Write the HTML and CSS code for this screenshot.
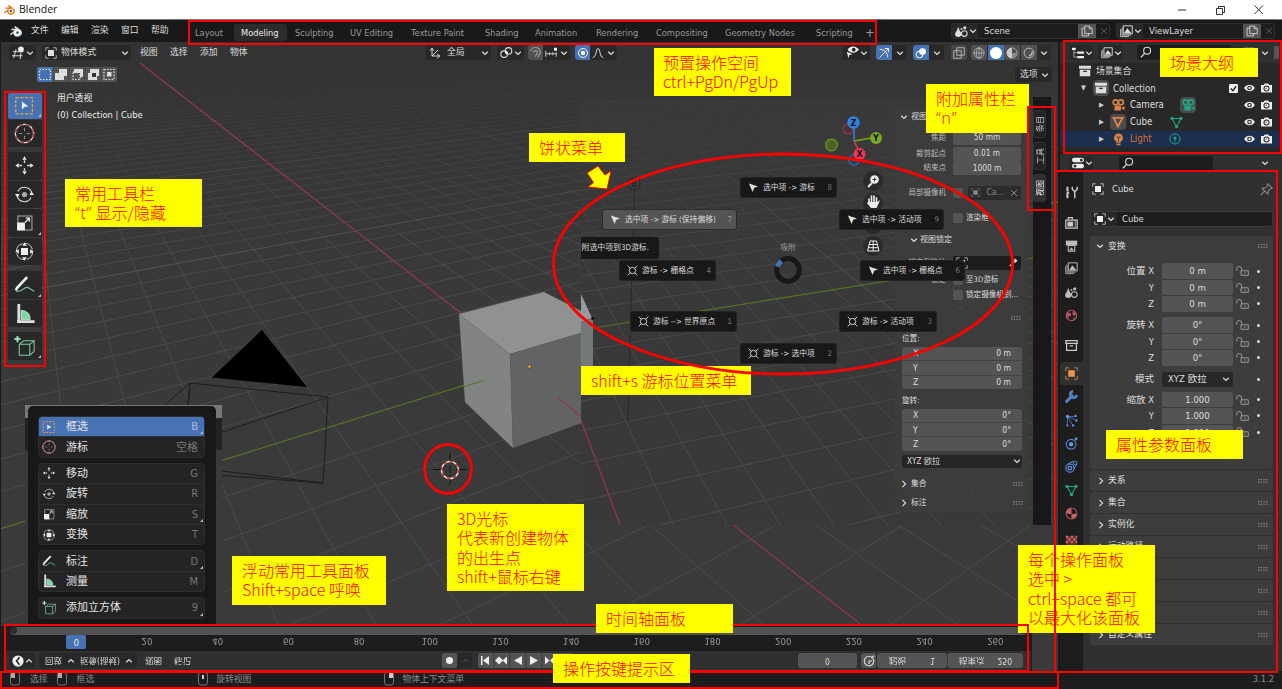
FILE: index.html
```html
<!DOCTYPE html>
<html lang="zh-CN">
<head>
<meta charset="utf-8">
<title>Blender</title>
<link rel="stylesheet" href="styles.css">
</head>
<body>
<svg class="defs" aria-hidden="true">
  <symbol id="chev" viewBox="0 0 8 8"><path d="M1.2 2.8 4 5.4 6.8 2.8" fill="none" stroke="currentColor" stroke-width="1.3"/></symbol>
  <symbol id="chevr" viewBox="0 0 8 8"><path d="M2.4 .8 5.6 4 2.4 7.2" fill="none" stroke="currentColor" stroke-width="1.1"/></symbol>
  <symbol id="x" viewBox="0 0 8 8"><path d="M1 1l6 6M7 1 1 7" fill="none" stroke="currentColor"/></symbol>
  <symbol id="obj" viewBox="0 0 16 16"><path d="M1 5V1h4M11 1h4v4M15 11v4h-4M5 15H1v-4" fill="none" stroke="currentColor" stroke-width="1.2" opacity=".75"/><rect x="4" y="4" width="8" height="8" fill="currentColor"/></symbol>
  <symbol id="logo" viewBox="0 0 16 14"><path d="M.8 10.800 6.500 6H2.500V4.300h5.300L5.900 2.500 7.200 1.200l6 4.400c3.600 3 1.400 8-3.500 8-3 0-5-2-4.900-4.200L2 12z" fill="currentColor"/><ellipse cx="9.700" cy="9" rx="3.200" ry="2.800" class="logo-ring"/><circle cx="9.700" cy="9" r="1.600" class="logo-core"/></symbol>
  <symbol id="search" viewBox="0 0 16 16"><circle cx="9.500" cy="6.300" r="4.600" fill="none" stroke="currentColor" stroke-width="1.500"/><path d="M6.200 9.800 1.200 15" stroke="currentColor" stroke-width="1.800"/></symbol>
  <symbol id="copy" viewBox="0 0 16 16"><path d="M5 1.500h6L15 5v6.500H5zM11 1.500V5h4M5 4H1.500v10.500H10v-3" fill="none" stroke="currentColor" stroke-width="1.300"/></symbol>
  <symbol id="scene-i" viewBox="0 0 16 16"><path d="M4 2 8 13H0z" fill="currentColor"/><circle cx="4" cy="11" r="3.700" fill="currentColor"/><circle cx="11.500" cy="10.500" r="3.500" fill="none" stroke="currentColor" stroke-width="1.300"/><circle cx="12" cy="3.500" r="2" fill="currentColor"/><circle cx="8" cy="5" r="1.200" fill="currentColor"/></symbol>
  <symbol id="layers" viewBox="0 0 16 16"><path d="M4 1h11v10H4z" fill="none" stroke="currentColor" stroke-width="1.200"/><path d="M5 10 9 4l5 6z" fill="currentColor"/><path d="M2.500 3v9.500H13M.8 5v9.300H11" fill="none" stroke="currentColor"/></symbol>
  <symbol id="eye" viewBox="0 0 16 12"><path d="M0 6C4-.5 12-.5 16 6 12 12.500 4 12.500 0 6z" fill="currentColor"/><circle cx="8" cy="6" r="3.500" fill="#282828"/><circle cx="8" cy="6" r="1.700" fill="currentColor"/></symbol>
  <symbol id="render" viewBox="0 0 16 14"><path d="M0 2.500h4L5.500.3h5L12 2.500h4v11H0z" fill="currentColor"/><circle cx="8" cy="7.800" r="4.400" fill="#282828"/><circle cx="8" cy="7.800" r="2.900" fill="currentColor"/><path d="M7 8.500a1.500 1.500 0 0 1 1.500-1.800" stroke="#282828" fill="none"/></symbol>
  <symbol id="box" viewBox="0 0 16 14"><path d="M0 0h16v4H0zM1 5.200h14V14H1z" fill="currentColor"/><path d="M5.500 7.500h5" stroke="#333" stroke-width="1.800"/></symbol>
  <symbol id="movie" viewBox="0 0 16 16"><circle cx="4.500" cy="4" r="3" fill="none" stroke="currentColor" stroke-width="2"/><circle cx="11" cy="4" r="3" fill="none" stroke="currentColor" stroke-width="2"/><path d="M3 8h8v6H3zM12 10.500 15.500 8.500v5L12 12z" fill="currentColor"/></symbol>
  <symbol id="mesh" viewBox="0 0 16 16"><path d="M2.500 3h11L8 13z" fill="none" stroke="currentColor" stroke-width="1.300"/><g fill="currentColor"><circle cx="2.500" cy="3" r="2"/><circle cx="13.500" cy="3" r="2"/><circle cx="8" cy="13" r="2"/></g></symbol>
  <symbol id="bulb" viewBox="0 0 16 16"><circle cx="8" cy="6" r="5.500" fill="currentColor"/><path d="M5.500 11h5v4h-5z" fill="currentColor"/><path d="M5.500 5h5M8 5v6M5 12.500h6" fill="none" stroke="#2a3140"/></symbol>
  <symbol id="lamp" viewBox="0 0 16 16"><circle cx="8" cy="8" r="6.800" fill="none" stroke="currentColor" stroke-width="1.300"/><circle cx="8" cy="6.500" r="2" fill="currentColor"/><path d="M8 8v6" stroke="currentColor"/></symbol>
  <symbol id="lock" viewBox="0 0 13 10"><path d="M.7 4.500V3a2.500 2.500 0 0 1 5 0v2" fill="none" stroke="currentColor"/><path d="M5 4.800h7.300V9.300H5z" fill="none" stroke="currentColor"/><path d="M8 7h1.500" stroke="currentColor"/></symbol>
  <symbol id="pin" viewBox="0 0 16 16"><path d="M9.500 1 15 6.500l-2 .5-3 3 .3 2.500-1 1L2.800 7l1-1 2.600.2 3-3zM5.500 10 1 15" fill="none" stroke="currentColor" stroke-width="1.300"/></symbol>
  <symbol id="dots" viewBox="0 0 10 4"><path d="M0 .7h10M0 3.200h10" stroke="currentColor" stroke-dasharray="1.400 1.300"/></symbol>
  <symbol id="arrow" viewBox="0 0 12 12"><path d="M1 1.500 11 5 6.800 6.300 5 11z" fill="currentColor"/></symbol>
  <symbol id="cur" viewBox="0 0 16 16"><circle cx="8" cy="8" r="4.600" fill="none" stroke="currentColor" stroke-width="1.300"/><path d="M1 1l3.800 3.800M15 1l-3.800 3.800M1 15l3.800-3.800M15 15l-3.800-3.800" stroke="currentColor" stroke-width="1.300"/></symbol>
  <symbol id="t-select" viewBox="0 0 24 24"><rect x="2" y="3" width="19" height="18.500" fill="none" stroke="#eaa93c" stroke-width="1.400" stroke-dasharray="3.500 1.800"/><path d="M9 7.500 16.500 13l-4.200.5L9 16.500z" fill="#eee"/></symbol>
  <symbol id="t-cursor" viewBox="0 0 24 24"><circle cx="12" cy="12" r="10.500" fill="none" stroke="#ddd" stroke-width="1.500"/><circle cx="12" cy="12" r="10.500" fill="none" stroke="#b33c48" stroke-width="1.700" stroke-dasharray="4.500 4"/><path d="M12 5.500v4M12 14.500v4M5.500 12h4M14.500 12h4" stroke="#aaa" stroke-width=".9"/></symbol>
  <symbol id="t-move" viewBox="0 0 24 24"><path d="M12 1.500 14.500 5.500h-5zM12 22.500 14.500 18.500h-5zM1.500 12 5.500 9.500v5zM22.500 12 18.500 9.500v5z" fill="#eee"/><path d="M12 6V9M12 15v3M6 12h3M15 12h3" stroke="#ddd" stroke-width="1.600"/></symbol>
  <symbol id="t-rotate" viewBox="0 0 24 24"><circle cx="12" cy="12" r="3" fill="#aaa"/><path d="M4.500 8.500A8.500 8.500 0 0 1 20.500 11M19.500 15.500A8.500 8.500 0 0 1 3.500 13" fill="none" stroke="#ddd" stroke-width="1.200"/><path d="M1 11.500h5.500L4 15.500zM17.500 12.500H23L20 8.500z" fill="#eee"/></symbol>
  <symbol id="t-scale" viewBox="0 0 24 24"><path d="M4.500 4.500h16v16h-16z" fill="none" stroke="#aaa" stroke-width="1.200"/><path d="M3.500 12h9v9h-9z" fill="#eee"/><path d="M12.500 12l5-5M13.500 7h4V11" fill="none" stroke="#eee" stroke-width="1.400"/></symbol>
  <symbol id="t-transform" viewBox="0 0 24 24"><circle cx="12" cy="12" r="9.300" fill="none" stroke="#ccc" stroke-width="1.100" stroke-dasharray="12 2.600"/><path d="M8 8h8v8H8zM12 1.500l2.500 4h-5zM12 22.500l2.500-4h-5zM1.500 12l4-2.500v5zM22.500 12l-4-2.500v5z" fill="#eee"/></symbol>
  <symbol id="t-pen" viewBox="0 0 24 24"><path d="M2 19C10 23 11 12 17 16s4 2 6 4" fill="none" stroke="#7bc7a0" stroke-width="1.300"/><path d="M15 3.500 3.800 15.500 2 18.500" fill="none" stroke="#eee" stroke-width="3"/></symbol>
  <symbol id="t-measure" viewBox="0 0 24 24"><path d="M8 8.500A9.500 9.500 0 0 1 18.500 19H8z" fill="#83d3a8" stroke="#d8f0e0" stroke-width=".8"/><path d="M5.500 1V21M3.500 21.300h20" fill="none" stroke="#ddd" stroke-width="3.200"/></symbol>
  <symbol id="t-cube" viewBox="0 0 24 24"><path d="M6 9.500h12V22H6zM6 9.500l5-4h12l-5 4M23 5.500v12L18 22" fill="none" stroke="#83c7a3" stroke-width="1.200"/><path d="M4 0v7M.5 3.500h7" stroke="#9ae0ba" stroke-width="2.200"/></symbol>
  <symbol id="mouse" viewBox="0 0 12 14"><rect x="1.500" y=".5" width="9" height="12.500" rx="2.500" fill="none" stroke="currentColor" stroke-width=".8"/></symbol>
  <symbol id="world" viewBox="0 0 16 16"><circle cx="8" cy="8" r="6.500" fill="none" stroke="currentColor" stroke-width="1.300"/><path d="M2 4l5 1 1 3-3 1-1 3-2-4zM10 2l4 4-3 3-2-3zM10 11l3-1-3 4z" fill="currentColor"/></symbol>
</svg>

<div class="window">
  <header class="titlebar">
    <svg class="brand"><use href="#logo"/></svg><span class="title">Blender</span>
    <svg class="winbtns" viewBox="0 0 90 12"><path d="M3 6h8" stroke="#333"/><path d="M41.500 4.500h6v6h-6zM43.500 4V2.500h6v6H48" fill="none" stroke="#333"/><path d="M79.500 1.500l8.500 8.500M88 1.500 79.500 10" stroke="#333"/></svg>
  </header>

  <nav class="topbar">
    <div class="menus"><svg class="blogo"><use href="#logo"/></svg><span>文件</span><span>编辑</span><span>渲染</span><span>窗口</span><span>帮助</span></div>
    <div class="tabs"><span>Layout</span><span class="on">Modeling</span><span>Sculpting</span><span>UV Editing</span><span>Texture Paint</span><span>Shading</span><span>Animation</span><span>Rendering</span><span>Compositing</span><span>Geometry Nodes</span><span>Scripting</span><span class="plus">+</span></div>
    <div class="idbox"><div class="pick"><svg class="i13"><use href="#scene-i"/></svg><svg class="cv"><use href="#chev"/></svg></div><b>Scene</b><div class="dup"><svg class="i12"><use href="#copy"/></svg></div><svg class="ix"><use href="#x"/></svg></div>
    <div class="idbox"><div class="pick"><svg class="i13"><use href="#layers"/></svg><svg class="cv"><use href="#chev"/></svg></div><b>ViewLayer</b><div class="dup"><svg class="i12"><use href="#copy"/></svg></div><svg class="ix"><use href="#x"/></svg></div>
  </nav>

  <div class="left">
    <main class="viewport">
      <svg class="scene" viewBox="1 42 1057 629">
        <defs>
          <linearGradient id="sky" x1="0" y1="0" x2="0" y2="1"><stop offset="0" stop-color="#333" /><stop offset=".35" stop-color="#393939"/><stop offset="1" stop-color="#3b3b3b"/></linearGradient>
          <clipPath id="clipB"><rect x="581" y="100" width="470" height="425"/></clipPath>
          <clipPath id="clipL"><path d="M1 42h580v583H1z"/></clipPath>
          <linearGradient id="fadeg" gradientUnits="userSpaceOnUse" x1="0" y1="60" x2="0" y2="270"><stop offset="0" stop-color="#fff" stop-opacity="0"/><stop offset="1" stop-color="#fff"/></linearGradient>
          <linearGradient id="fadeg2" gradientUnits="userSpaceOnUse" x1="0" y1="85" x2="0" y2="300"><stop offset="0" stop-color="#fff" stop-opacity="0"/><stop offset="1" stop-color="#fff"/></linearGradient>
          <mask id="fade" maskUnits="userSpaceOnUse" x="0" y="40" width="1060" height="640"><rect x="0" y="40" width="1060" height="640" fill="url(#fadeg)"/></mask>
          <mask id="fade2" maskUnits="userSpaceOnUse" x="0" y="40" width="1060" height="640"><rect x="0" y="40" width="1060" height="640" fill="url(#fadeg2)"/></mask>
        </defs>
        <rect x="0" y="42" width="1060" height="630" fill="url(#sky)"/>
        <g id="gridA" class="grid" mask="url(#fade)"></g>
        <path d="M140 63 864 627" class="ax-x"/>
        <path d="M0 529 1060 201" class="ax-y"/>
        <path class="wire" d="M190 383 328 397 323 483 180 466zM190 383 150 418M190 383 186 466M328 397 150 456M323 483 150 470"/>
        <path d="M262 330 307 387 212 377.500z" fill="#000"/>
        <g clip-path="url(#clipL)">
          <path d="M459 314 544 292 581 311 581 333 510 354z" fill="#909193"/>
          <path d="M459 314 510 354 513 448 465 402z" fill="#818483"/>
          <path d="M510 354 590 330 590 420 513 448z" fill="#636363"/>
        </g>
        <path d="M463 387 484 380.500" class="ax-y"/><path d="M558 398 582 417" class="ax-x"/>
        <circle cx="529.500" cy="366.500" r="1.800" fill="#f79a2c" stroke="#40342a" stroke-width=".6"/>
        <g fill="none"><path d="M450 453v10M450 475v10M433 469.500h10M456 469.500h11M450 466v7" stroke="#111"/><circle cx="450" cy="470" r="8.500" stroke="#eee" stroke-width="1.400"/><circle cx="450" cy="470" r="8.500" stroke="#d22" stroke-width="1.400" stroke-dasharray="3.300 3.300"/></g>
        <g clip-path="url(#clipB)">
          <rect x="581" y="100" width="470" height="425" fill="#393939"/>
          <g id="gridB" class="grid" mask="url(#fade2)"></g>
          <path d="M581 420 620 525" class="ax-x"/><path d="M581 330 1051 255" class="ax-y"/>
          <path d="M581 294 592 318 581 322z" fill="#999a9c"/><path d="M581 322 593 318V366H581z" fill="#757878"/><circle cx="592.500" cy="318.500" r="1.300" fill="#000"/>
          <circle cx="634" cy="184" r="6" fill="none" stroke="#1a1a1a" stroke-dasharray="2 1.500"/><circle cx="634" cy="184" r="2" fill="none" stroke="#1a1a1a"/><path d="M634 191 628 422" stroke="#2b2b2b"/>
        </g>
      </svg>

      <div class="vhead">
        <div class="btn"><svg class="i13" viewBox="0 0 16 16"><path d="M1 7h13M0 12h13M5 4 2 15M11 8l-1 8" stroke="#ddd" stroke-width="1.200" fill="none"/><circle cx="11" cy="4" r="3.500" fill="#eee"/></svg><svg class="cv"><use href="#chev"/></svg></div>
        <div class="btn mode"><svg class="i12"><use href="#obj"/></svg><span>物体模式</span><svg class="cv"><use href="#chev"/></svg></div>
        <div class="words"><span>视图</span><span>选择</span><span>添加</span><span>物体</span></div>
        <div class="btn orient"><svg class="i12" viewBox="0 0 16 16"><path d="M4 2v10h10M4 12 12 4M1.500 5 4 1.500 6.500 5M11 9.500l3.500 2.500L11 15" stroke="#ddd" fill="none" stroke-width="1.300"/></svg><span>全局</span><svg class="cv"><use href="#chev"/></svg></div>
        <div class="btn"><svg class="i13" viewBox="0 0 16 16"><circle cx="5" cy="10" r="4" fill="none" stroke="#ddd" stroke-width="1.400"/><circle cx="10.500" cy="6" r="4" fill="none" stroke="#ddd" stroke-width="1.400"/><circle cx="8" cy="8" r="1.600" fill="#eee"/></svg><svg class="cv"><use href="#chev"/></svg></div>
        <div class="btn trio snap"><div class="cell lit"><svg class="i13" viewBox="0 0 16 16"><path d="M2 6.500A6 5.500 0 0 1 14 8.500L10.500 14M5.500 8a2.500 2.500 0 0 1 5 .5L7.500 13" fill="none" stroke="#999" stroke-width="1.500"/></svg></div><svg class="i12" viewBox="0 0 16 16"><path d="M1 5v8M15 7v6M6 7v4M10.500 7v4M1 9h14" stroke="#ccc" stroke-width="1.300"/><path d="M12 1h4v4h-4z" fill="#eee"/></svg><svg class="cv"><use href="#chev"/></svg></div>
        <div class="btn trio prop"><div class="cell blue"><svg class="i12" viewBox="0 0 16 16"><circle cx="8" cy="8" r="6" fill="none" stroke="#fff" stroke-width="1.300"/><circle cx="8" cy="8" r="3" fill="#fff"/></svg></div><svg class="i12" viewBox="0 0 16 16"><path d="M1 14C6 14 5 2 8 2s2 12 7 12" fill="none" stroke="#ddd" stroke-width="1.300"/></svg><svg class="cv"><use href="#chev"/></svg></div>
        <div class="grow"></div>
        <div class="btn"><svg class="i13" viewBox="0 0 16 16"><path d="M2 4.500c3.500-5 9.500-5 14 0-4.500 5-10.500 5-14 0z" fill="#eee"/><circle cx="9.500" cy="4.500" r="2.300" fill="#222"/><path d="M1 7l7 3-4 1-1 4z" fill="#eee"/></svg><svg class="cv"><use href="#chev"/></svg></div>
        <div class="btn duo"><div class="cell blue"><svg class="i12" viewBox="0 0 16 16"><path d="M2 3c7 0 11 5 11 11M2 14 14 2M9 2h5v5" fill="none" stroke="#eee" stroke-width="1.300"/></svg></div><svg class="cv"><use href="#chev"/></svg></div>
        <div class="btn duo"><div class="cell blue"><svg class="i12" viewBox="0 0 16 16"><circle cx="10" cy="6" r="4.500" fill="#fff"/><circle cx="6" cy="10" r="4.500" fill="none" stroke="#fff" stroke-width="1.300"/></svg></div><svg class="cv"><use href="#chev"/></svg></div>
        <div class="btn xray"><svg class="i12" viewBox="0 0 16 16"><path d="M5 1h10v10H5zM1 5h10v10H1z" fill="none" stroke="#bbb" stroke-width="1.200"/></svg></div>
        <div class="btn shade"><div class="cell lit"><svg class="i12" viewBox="0 0 16 16"><path d="M8 1v14M1 8h14" stroke="#bbb"/><circle cx="8" cy="8" r="6.800" fill="none" stroke="#bbb"/><ellipse cx="8" cy="8" rx="3.500" ry="6.800" fill="none" stroke="#bbb"/></svg></div><div class="cell blue"><svg class="i12" viewBox="0 0 16 16"><circle cx="8" cy="8" r="8" fill="#fff"/></svg></div><div class="cell lit"><svg class="i12" viewBox="0 0 16 16"><circle cx="8" cy="8" r="6.800" fill="none" stroke="#bbb"/><path d="M8 1a7 7 0 0 0 0 14z" fill="#ccc"/><path d="M8 8h7a7 7 0 0 1-7 7z" fill="#888"/></svg></div><div class="cell lit"><svg class="i12" viewBox="0 0 16 16"><circle cx="8" cy="8" r="6.500" fill="none" stroke="#bbb" stroke-width="1.300"/><path d="M8 12a5 5 0 0 0 4-6" fill="none" stroke="#bbb" stroke-width="2"/></svg></div><svg class="cv"><use href="#chev"/></svg></div>
      </div>
      <div class="vsub">
        <svg class="modes" viewBox="0 0 80 15"><rect width="80" height="15" rx="2" fill="#555"/><path d="M2 0h14v15H2a2 2 0 0 1-2-2V2a2 2 0 0 1 2-2z" fill="#4772b3"/><path d="M16 0v15M32 0v15M48 0v15M64 0v15" stroke="#3b3b3b" stroke-width=".7"/><g fill="none" stroke="#e8e8e8" stroke-width="1.200" stroke-dasharray="1.500 1.500"><path d="M2.500 2.500h11v10h-11zM36 5h7v7.500h-7zM67 2.500h10v10H67z"/></g><path d="M22 2h8v7h-3v4h-9V6h4zM37 2h9v8h-3V6h-6zM53 2h9v7h-2v4h-9V6h2zM70 5h4.500v4.500H70z" fill="#ddd"/><path d="M55 6h4v4h-4z" fill="#333"/></svg>
        <div class="btn opts"><span>选项</span><svg class="cv"><use href="#chev"/></svg></div>
      </div>
      <div class="vbody">
        <div class="toolbar">
          <div class="tool sel fly"><svg><use href="#t-select"/></svg></div><div class="tool"><svg><use href="#t-cursor"/></svg></div>
          <div class="tool gap"><svg><use href="#t-move"/></svg></div><div class="tool"><svg><use href="#t-rotate"/></svg></div><div class="tool fly"><svg><use href="#t-scale"/></svg></div><div class="tool"><svg><use href="#t-transform"/></svg></div>
          <div class="tool gap2 fly"><svg><use href="#t-pen"/></svg></div><div class="tool"><svg><use href="#t-measure"/></svg></div>
          <div class="tool gap fly"><svg><use href="#t-cube"/></svg></div>
        </div>
        <div class="info"><div>用户透视</div><div>(0) Collection | Cube</div></div>
      </div>
    </main>

    <section class="timeline">
      <div class="tlhead">
        <div class="btn"><svg class="i12" viewBox="0 0 16 16"><circle cx="8" cy="8" r="7.500" fill="#eee"/><path d="M10 3 6 8l4 5" fill="none" stroke="#222" stroke-width="2"/></svg><svg class="cv"><use href="#chev"/></svg></div>
        <div class="btn w2"><span>回放</span><svg class="cv"><use href="#chev"/></svg><span>抠像(插帧)</span><svg class="cv"><use href="#chev"/></svg></div>
        <span>视图</span><span>标记</span>
        <svg class="play" viewBox="0 0 132 16"><rect width="15" height="15" rx="2" fill="#545454"/><path d="M16 0h14v15H16z" fill="#282828"/><circle cx="7.500" cy="7.500" r="3.500" fill="#eee"/><path d="M21 6l2.500 2.500L26 6" fill="none" stroke="#555"/><rect x="36" width="95" height="15" rx="2" fill="#545454"/><path d="M52 0v15M68 0v15M84 0v15M100 0v15M116 0v15" stroke="#3a3a3a"/><path d="M39 3h1.500v9H39zM47 3v9l-6-4.500zM53 7.500l4-4 4 4-4 4zM65 3.500v8l-4.500-4zM80 3v9l-8-4.500zM88 3v9l8-4.500zM103 3.500v8l4.500-4zM108 7.500l4-4 4 4-4 4z" fill="#eee"/></svg>
        <div class="f frame">0</div>
        <div class="f clock"><svg class="i12" viewBox="0 0 16 16"><circle cx="8" cy="8" r="6.300" fill="none" stroke="#ddd" stroke-width="1.500"/><path d="M8 4v4h4M11 12l4 3" fill="none" stroke="#ddd" stroke-width="1.500"/></svg></div>
        <div class="f start"><span>起始</span><span>1</span></div><div class="f end"><span>结束点</span><span>250</span></div>
      </div>
      <div class="ruler"><span class="now">0</span><span>20</span><span>40</span><span>60</span><span>80</span><span>100</span><span>120</span><span>140</span><span>160</span><span>180</span><span>200</span><span>220</span><span>240</span><span>260</span></div>
      <div class="scroll"><i></i><i></i></div>
    </section>
  </div>

  <aside class="right">
    <section class="outliner">
      <div class="ohead">
        <div class="btn"><svg class="i12" viewBox="0 0 16 16"><path d="M0 1h5v3H0zM7 6h9v3H7zM7 12h9v3H7z" fill="#eee"/><path d="M2.500 4v9.500H7M2.500 7.500H7" fill="none" stroke="#ccc"/></svg><svg class="cv"><use href="#chev"/></svg></div>
        <div class="btn"><svg class="i12"><use href="#layers"/></svg><svg class="cv"><use href="#chev"/></svg></div>
        <div class="find"><svg class="i12"><use href="#search"/></svg></div>
        <svg class="i12 flt" viewBox="0 0 16 16"><path d="M1 1h14L10 8v7l-4-3V8z" fill="#ddd"/></svg><svg class="cv"><use href="#chev"/></svg><i class="stub"></i>
      </div>
      <div class="orow root"><svg class="i12"><use href="#box"/></svg><span>场景集合</span></div>
      <div class="orow coll"><em>▼</em><div class="chip"><svg class="i12"><use href="#box"/></svg></div><span>Collection</span><div class="vis"><svg class="chk" viewBox="0 0 10 10"><rect width="10" height="10" rx="1.500" fill="#eee"/><path d="M2 5l2.300 2.500L8 2.500" fill="none" stroke="#222" stroke-width="1.500"/></svg><svg class="eye"><use href="#eye"/></svg><svg class="rnd"><use href="#render"/></svg></div></div>
      <div class="orow kid"><em>▶</em><div class="ico"><svg class="i13 or"><use href="#movie"/></svg></div><span>Camera</span><div class="chip c1"><svg class="i13 gr"><use href="#movie"/></svg></div><div class="vis"><svg class="eye"><use href="#eye"/></svg><svg class="rnd"><use href="#render"/></svg></div></div>
      <div class="orow kid"><em>▶</em><div class="ico chip"><svg class="i12 or" viewBox="0 0 16 16"><path d="M2 2.500h12L8 14z" fill="none" stroke="currentColor" stroke-width="2.600"/></svg></div><span>Cube</span><svg class="i13 gr c2"><use href="#mesh"/></svg><div class="vis"><svg class="eye"><use href="#eye"/></svg><svg class="rnd"><use href="#render"/></svg></div></div>
      <div class="orow kid picked"><em>▶</em><div class="ico"><svg class="i13 or"><use href="#bulb"/></svg></div><span>Light</span><svg class="i12 gr c3"><use href="#lamp"/></svg><div class="vis"><svg class="eye"><use href="#eye"/></svg><svg class="rnd"><use href="#render"/></svg></div></div>
    </section>

    <section class="props">
      <div class="phead"><div class="btn"><svg class="i12" viewBox="0 0 16 16"><rect y="1" width="16" height="6" rx="3" fill="#eee"/><rect y="9" width="16" height="6" rx="3" fill="#eee"/><circle cx="12.500" cy="4" r="2" fill="#333"/><circle cx="4" cy="12" r="2" fill="#333"/></svg><svg class="cv"><use href="#chev"/></svg></div><div class="find"><svg class="i12"><use href="#search"/></svg></div><svg class="cv last"><use href="#chev"/></svg></div>
      <div class="pbody">
        <div class="ptabs">
          <div><svg viewBox="0 0 16 16"><path d="M3 1v5M3 9v6M2 8h3" stroke="#ccc" stroke-width="2.500"/><path d="M9 1v3l3 3 3-3V1M12 6v9" stroke="#ccc" stroke-width="1.800" fill="none"/></svg></div>
          <div class="g1"><svg viewBox="0 0 16 16"><path d="M1 5h14v10H1zM4 4V2h5v2" fill="none" stroke="#ccc" stroke-width="1.500"/><path d="M3 7h7v6H3z" fill="#ccc"/><path d="M12.500 6v8" stroke="#ccc" fill="none"/></svg></div>
          <div><svg viewBox="0 0 16 16"><path d="M1 2h14v6H1z" fill="#bbb"/><path d="M4 8h8v7H4z" fill="none" stroke="#bbb" stroke-width="1.300"/><path d="M5 14l3-4 3 4z" fill="#bbb"/></svg></div>
          <div><svg class="gy"><use href="#layers"/></svg></div><div><svg class="gy"><use href="#scene-i"/></svg></div><div><svg class="rd"><use href="#world"/></svg></div>
          <div class="g2"><svg viewBox="0 0 16 16"><path d="M1 2h14v3.500H1zM2 5.500h12V14H2zM6 8.500h4" fill="none" stroke="#ccc" stroke-width="1.500"/></svg></div>
          <div class="g3 cur"><svg class="ob"><use href="#obj"/></svg></div>
          <div><svg viewBox="0 0 16 16"><path d="M2 14 9 7" stroke="#5680c8" stroke-width="3.500" stroke-linecap="round"/><path d="M10 1.500a4 4 0 1 0 4.500 4.500" fill="none" stroke="#5680c8" stroke-width="3"/></svg></div>
          <div><svg viewBox="0 0 16 16"><path d="M3 3h9M3 3l9 4M3 3l6 10M3 3v10" stroke="#5680c8" stroke-width="1"/><g fill="#6a94dc"><circle cx="3" cy="3" r="2"/><circle cx="13" cy="2.500" r="1.500"/><circle cx="14" cy="8" r="1.500"/><circle cx="10" cy="14" r="1.500"/><circle cx="3" cy="14" r="1.300"/></g></svg></div>
          <div><svg viewBox="0 0 16 16"><circle cx="7.500" cy="9" r="6" fill="none" stroke="#5680c8" stroke-width="1.400"/><circle cx="7.500" cy="9" r="2.700" fill="#6a94dc"/><circle cx="13.500" cy="2.500" r="1.800" fill="#6a94dc"/></svg></div>
          <div><svg viewBox="0 0 16 16"><circle cx="6" cy="10" r="5" fill="none" stroke="#5680c8" stroke-width="1.500"/><circle cx="6" cy="10" r="2.200" fill="none" stroke="#6a94dc" stroke-width="1.500"/><path d="M3 5.500 10 1.500M11 11l3.500-6" stroke="#5680c8" stroke-width="1.500"/><circle cx="12.500" cy="3.500" r="2.300" fill="none" stroke="#5680c8" stroke-width="1.400"/></svg></div>
          <div><svg class="gn"><use href="#mesh"/></svg></div>
          <div><svg viewBox="0 0 16 16"><circle cx="8" cy="8" r="6.700" fill="none" stroke="#b4555d" stroke-width="1.300"/><path d="M8 1.500a6.500 6.500 0 0 0-6.500 6.500L8 9zM8 9l6.500-1A6.500 6.500 0 0 1 8 14.500z" fill="#c9636b"/></svg></div>
          <div class="g4"><svg viewBox="0 0 16 16"><path d="M1 1h14v14H1z" fill="#5a2f33"/><path d="M1 1h3v3H1zM7 1h3v3H7zM13 1h2v3h-2zM4 4h3v3H4zM10 4h3v3h-3zM1 7h3v3H1zM7 7h3v3H7zM13 7h2v3h-2z" fill="#c9636b"/></svg></div>
        </div>
        <div class="pmain">
          <div class="crumb"><svg class="i12 wh"><use href="#obj"/></svg><span>Cube</span><svg class="i13 pin"><use href="#pin"/></svg></div>
          <div class="name"><div><svg class="i12 wh"><use href="#obj"/></svg><svg class="cv"><use href="#chev"/></svg></div><b>Cube</b></div>
          <div class="panel big">
            <div class="ptitle"><svg class="cv"><use href="#chev"/></svg><span>变换</span><svg class="dots"><use href="#dots"/></svg></div>
            <div class="rows">
              <div class="r"><label>位置 X</label><b>0 m</b><svg class="lk"><use href="#lock"/></svg><i></i></div><div class="r"><label>Y</label><b>0 m</b><svg class="lk"><use href="#lock"/></svg><i></i></div><div class="r"><label>Z</label><b>0 m</b><svg class="lk"><use href="#lock"/></svg><i></i></div>
              <div class="r sp"><label>旋转 X</label><b>0°</b><svg class="lk"><use href="#lock"/></svg><i></i></div><div class="r"><label>Y</label><b>0°</b><svg class="lk"><use href="#lock"/></svg><i></i></div><div class="r"><label>Z</label><b>0°</b><svg class="lk"><use href="#lock"/></svg><i></i></div>
              <div class="r sp"><label>模式</label><b class="dd">XYZ 欧拉<svg class="cv"><use href="#chev"/></svg></b><s></s><i></i></div>
              <div class="r sp4"><label>缩放 X</label><b>1.000</b><svg class="lk"><use href="#lock"/></svg><i></i></div><div class="r"><label>Y</label><b>1.000</b><svg class="lk"><use href="#lock"/></svg><i></i></div><div class="r"><label>Z</label><b>1.000</b><svg class="lk"><use href="#lock"/></svg><i></i></div>
            </div>
            <div class="delta"><svg class="cr"><use href="#chevr"/></svg><span>变换增量</span></div>
          </div>
          <div class="panel"><svg class="cr"><use href="#chevr"/></svg><span>关系</span><svg class="dots"><use href="#dots"/></svg></div>
          <div class="panel"><svg class="cr"><use href="#chevr"/></svg><span>集合</span><svg class="dots"><use href="#dots"/></svg></div>
          <div class="panel"><svg class="cr"><use href="#chevr"/></svg><span>实例化</span><svg class="dots"><use href="#dots"/></svg></div>
          <div class="panel"><svg class="cr"><use href="#chevr"/></svg><span>运动路径</span><svg class="dots"><use href="#dots"/></svg></div>
          <div class="panel"><svg class="dots"><use href="#dots"/></svg></div>
          <div class="panel"><svg class="dots"><use href="#dots"/></svg></div>
          <div class="panel"><svg class="dots"><use href="#dots"/></svg></div>
          <div class="panel"><svg class="cr"><use href="#chevr"/></svg><span>自定义属性</span><svg class="dots"><use href="#dots"/></svg></div>
        </div>
      </div>
    </section>
  </aside>

  <footer class="status"><svg><use href="#mouse"/><path d="M2 1h4v5H2z" fill="#aaa"/></svg><span>选择</span><svg><use href="#mouse"/><path d="M2 1h4v5H2z" fill="#aaa"/></svg><span>框选</span><svg><use href="#mouse"/><path d="M5 3h2v4H5z" fill="#ccc"/></svg><span>旋转视图</span><svg><use href="#mouse"/><path d="M6 1h4v5H6z" fill="#ccc"/></svg><span>物体上下文菜单</span><span class="ver">3.1.2</span></footer>
</div>

<!-- 3D navigation gizmo -->
<svg class="gizmo" viewBox="820 112 66 146">
  <g stroke-width="1.200"><circle cx="848" cy="129" r="5" fill="#4a3236" stroke="#95394a"/><circle cx="854" cy="160" r="5.200" fill="#2f3e52" stroke="#2d6ab8"/><circle cx="831.500" cy="145" r="5.800" fill="#4c6327" stroke="#6c9c1d"/></g>
  <path d="M854 141V124" stroke="#2f83e3" stroke-width="1.500"/><path d="M854 141 872 138" stroke="#76aa1e" stroke-width="1.500"/><path d="M854 141 859 151" stroke="#e8374f" stroke-width="1.500"/>
  <circle cx="853.500" cy="122.500" r="6.200" fill="#2f83e3"/><circle cx="876" cy="138" r="6" fill="#76aa1e"/><circle cx="859.500" cy="154" r="6" fill="#f5365c"/>
  <g class="gl"><text x="853.500" y="125.500">Z</text><text x="876" y="141">Y</text><text x="859.500" y="157">X</text></g>
  <g fill="#2a2a2a"><circle cx="873" cy="181" r="10"/><circle cx="873" cy="203" r="10"/><circle cx="873" cy="224" r="10"/><circle cx="873" cy="246" r="10"/></g>
  <circle cx="874.500" cy="179.500" r="4.300" fill="#eee"/><path d="M872 183 868 187" stroke="#eee" stroke-width="2"/><path d="M872.500 179.500h4M874.500 177.500v4" stroke="#333"/>
  <path d="M869 203v-4M871.500 202v-6M874 202v-6M876.500 203v-5" stroke="#eee" stroke-width="1.600" stroke-linecap="round"/><path d="M868 202h9.500l2-2v1.500l-3 6.500h-5.500l-4-5z" fill="#eee"/>
  <path d="M870 241h6.500l2.500 10h-11.500zM873.200 241v10M869 244.500h8.500M868 247.700h10.300" fill="none" stroke="#eee"/>
</svg>

<!-- sidebar -->
<div class="npanel">
  <div class="nsec view">
    <div class="nh"><svg class="cv"><use href="#chev"/></svg><span>视图</span></div>
    <div class="nr a"><label>焦距</label><b>50 mm</b></div>
    <div class="nr"><label>裁剪起点</label><b>0.01 m</b></div>
    <div class="nr tight"><label>结束点</label><b>1000 m</b></div>
    <div class="nr cam"><label>局部摄像机</label><div><i></i><b><svg class="i10"><use href="#obj"/></svg>Ca...<svg class="ix"><use href="#x"/></svg></b></div></div>
    <div class="nr rend"><label></label><div><i></i>渲染框</div></div>
    <div class="nh sub"><svg class="cv"><use href="#chev"/></svg><span>视图锁定</span></div>
    <div class="nr lk1"><label>锁定到物体</label><b class="dark"><svg class="i12"><use href="#obj"/></svg><svg class="i10" viewBox="0 0 10 10"><path d="M1 9 6 4" stroke="#ccc" stroke-width="1.500"/><path d="M4.500 3 7 5.500 9.500 3 7 .5z" fill="#ccc"/></svg></b></div>
    <div class="nr lk2"><label>锁定</label><div><i></i>至3D游标</div></div>
    <div class="nr lk3"><label></label><div><i></i>锁定摄像机到...</div></div>
  </div>
  <div class="nsec cursor">
    <div class="nh3"><span>3D游标</span><svg class="dots"><use href="#dots"/></svg></div>
    <p>位置:</p>
    <div class="stack"><div><span>X</span><span>0 m</span></div><div><span>Y</span><span>0 m</span></div><div><span>Z</span><span>0 m</span></div></div>
    <p class="p2">旋转:</p>
    <div class="stack"><div><span>X</span><span>0°</span></div><div><span>Y</span><span>0°</span></div><div><span>Z</span><span>0°</span></div></div>
    <div class="ndd"><span>XYZ 欧拉</span><svg class="cv"><use href="#chev"/></svg></div>
  </div>
  <div class="nsec row"><svg class="cr"><use href="#chevr"/></svg><span>集合</span><svg class="dots"><use href="#dots"/></svg></div>
  <div class="nsec row"><svg class="cr"><use href="#chevr"/></svg><span>标注</span><svg class="dots"><use href="#dots"/></svg></div>
</div>
<div class="ntabs"><span>条目</span><span>工具</span><span class="on">视图</span></div>

<!-- snap pie menu -->
<div class="pie">
  <div class="pi p8"><svg><use href="#arrow"/></svg><span>选中项 -&gt; 游标</span><u>8</u></div>
  <div class="pi p7"><svg><use href="#arrow"/></svg><span>选中项 -&gt; 游标 (保持偏移)</span><u>7</u></div>
  <div class="pi p9"><svg><use href="#arrow"/></svg><span>选中项 -&gt; 活动项</span><u>9</u></div>
  <div class="tip"><span>吸附选中项到3D游标.</span></div>
  <div class="pi p4"><svg><use href="#cur"/></svg><span>游标 -&gt; 栅格点</span><u>4</u></div>
  <div class="pi p6"><svg><use href="#arrow"/></svg><span>选中项 -&gt; 栅格点</span><u>6</u></div>
  <div class="pi p1"><svg><use href="#cur"/></svg><span>游标 --&gt; 世界原点</span><u>1</u></div>
  <div class="pi p3"><svg><use href="#cur"/></svg><span>游标 -&gt; 活动项</span><u>3</u></div>
  <div class="pi p2"><svg><use href="#cur"/></svg><span>游标 -&gt; 选中项</span><u>2</u></div>
  <div class="ring"><span>吸附</span><svg viewBox="0 0 30 30"><circle cx="15" cy="15" r="11.300" fill="none" stroke="#181818" stroke-width="5.200"/><path d="M4.300 11.800A11.200 11.200 0 0 1 8.500 6" fill="none" stroke="#4772b3" stroke-width="5"/></svg></div>
</div>

<!-- floating tool menu -->
<div class="float">
  <div class="fmenu">
    <div class="fg"><div class="fi on fly"><svg><use href="#t-select"/></svg><span>框选</span><u>B</u></div><div class="fi"><svg><use href="#t-cursor"/></svg><span>游标</span><u>空格</u></div></div>
    <div class="fg"><div class="fi"><svg><use href="#t-move"/></svg><span>移动</span><u>G</u></div><div class="fi"><svg><use href="#t-rotate"/></svg><span>旋转</span><u>R</u></div><div class="fi fly"><svg><use href="#t-scale"/></svg><span>缩放</span><u>S</u></div><div class="fi"><svg><use href="#t-transform"/></svg><span>变换</span><u>T</u></div></div>
    <div class="fg"><div class="fi fly"><svg><use href="#t-pen"/></svg><span>标注</span><u>D</u></div><div class="fi"><svg><use href="#t-measure"/></svg><span>测量</span><u>M</u></div></div>
    <div class="fg"><div class="fi fly"><svg><use href="#t-cube"/></svg><span>添加立方体</span><u>9</u></div></div>
  </div>
</div>

<!-- callouts -->
<div class="note n1">预置操作空间<br>ctrl+PgDn/PgUp</div>
<div class="note n2">附加属性栏<br><span class="lat">“n”</span></div>
<div class="note n3">饼状菜单</div>
<div class="note n4">常用工具栏<br><span class="lat">“t”</span> 显示/隐藏</div>
<div class="note n5">shift+s 游标位置菜单</div>
<div class="note n6">3D光标<br>代表新创建物体<br>的出生点<br>shift+鼠标右键</div>
<div class="note n7">浮动常用工具面板<br>Shift+space 呼唤</div>
<div class="note n10">每个操作面板<br>选中 &gt;<br>ctrl+space 都可<br>以最大化该面板</div>
<div class="note n11">属性参数面板</div>
<svg class="marks" viewBox="0 0 1282 689">
  <g fill="none" stroke="#f00" stroke-width="2">
    <rect x="189" y="21" width="687" height="23"/><rect x="5" y="92" width="40" height="274"/><rect x="1064" y="41" width="217" height="112"/>
    <rect x="1028" y="107" width="27" height="103"/><rect x="1055" y="171" width="222" height="501"/><rect x="5" y="625" width="1023" height="47"/><rect x="1" y="672" width="1057" height="16"/>
    <path d="M4 671.500h1025" stroke-width="3"/>
    <ellipse cx="783" cy="264" rx="229.500" ry="110" stroke-width="2.800"/><ellipse cx="448" cy="469" rx="23.500" ry="24.500" stroke-width="2.800"/>
  </g>
  <path d="M587 173 598 166 605 175 611 171 607 189 588 187 593.500 182.500z" fill="#ff0" stroke="#f00" stroke-width=".9"/>
</svg>
<div class="note n8">时间轴面板</div>
<div class="note n9">操作按键提示区</div>
<div class="note n12">场景大纲</div>
<script src="grid.js"></script>
</body>
</html>
```
FILE: styles.css
```css
* { box-sizing: border-box; }
body { margin: 0; width: 1282px; height: 689px; overflow: hidden; position: relative; background: #1a1a1a; color: #ddd;
  font: 9px/1 "DejaVu Sans Condensed", "DejaVu Sans", "Noto Sans CJK SC", sans-serif; font-stretch: condensed; }
b, em, u, s, i { font-weight: normal; font-style: normal; text-decoration: none; }
span, label, b { white-space: nowrap; }
svg { flex: none; display: block; }
.defs { width: 0; height: 0; position: absolute; }
.i13 { width: 13px; height: 13px; } .i12 { width: 12px; height: 12px; } .i10 { width: 9px; height: 9px; }
.cv { width: 8px; height: 8px; } .cr { width: 8px; height: 8px; } .ix { width: 8px; height: 8px; color: #888; }
.dots { width: 10px; height: 4px; color: #999; }
.grow { flex: 1; }
.btn { display: flex; align-items: center; height: 15px; background: #282828; border-radius: 3px; padding: 0 2px 0 3px; gap: 1px; color: #ddd; flex: none; }

.window { display: grid; width: 1282px; height: 689px; grid-template: 20px 22px 629px 18px / 1059px 223px; }
.titlebar { grid-column: 1 / 3; background: #fff; border-bottom: 1px solid #777; display: flex; align-items: center; padding: 0 17px 0 3px; }
.brand { width: 13px; height: 11px; color: #e87d0d; margin-right: 3px; }
.logo-ring { fill: #fff; } .logo-core { fill: #265787; }
.title { flex: 1; color: #111; font: 10.500px/1 "Open Sans", "Noto Sans", sans-serif; }
.winbtns { width: 90px; height: 12px; }

.topbar { grid-column: 1 / 3; background: #191919; display: flex; align-items: flex-start; padding-left: 9px; }
.menus { display: grid; grid-template-columns: 22px repeat(5, 30px); align-items: center; height: 21px; width: 178px; font-size: 8.800px; }
.blogo { width: 14px; height: 12px; color: #ddd; }
.blogo .logo-ring { fill: #191919; } .blogo .logo-core { fill: #ddd; }
.tabs { display: grid; grid-template-columns: 47px 53px 55px 61px 74px 50px 61px 60px 69px 91px 53px 20px; width: 764px; color: #999; font-size: 9.200px; height: 17px; margin-top: 4px; align-items: center; }
.tabs span { padding-left: 8px; }
.tabs .on { background: #2c2c2c; color: #eee; border-radius: 3px; height: 17px; line-height: 17px; padding-left: 7px; }
.tabs .plus { font-size: 13px; padding-left: 4px; }
.idbox { display: grid; grid-template-columns: 26px 100px 18px 15px; align-items: center; width: 159px; height: 16px; margin: 3px 6px 0 0; background: #1d1d1d; border: 1px solid #303030; border-radius: 3px; font-size: 9.500px; }
.idbox .pick { display: flex; align-items: center; gap: 1px; background: #282828; padding-left: 3px; height: 14px; }
.idbox b { padding-left: 6px; } .dup { background: #545454; height: 14px; padding: 1px 3px; color: #ccc; } .idbox .ix { margin-left: 4px; color: #555; }

.left { display: grid; grid-template-rows: 584px 45px; padding-left: 1px; }
.viewport { position: relative; }
.scene { position: absolute; left: 0; top: 0; width: 1057px; height: 629px; }
.grid { stroke: #4b4b4b; stroke-width: 1; }
.grid .major { stroke: #555; }
.ax-x { stroke: #93394a; stroke-width: 1.200; fill: none; } .ax-y { stroke: #577525; stroke-width: 1.200; fill: none; }
.wire { fill: none; stroke: #161616; stroke-width: .8; }
.vhead { position: relative; display: flex; align-items: center; height: 21px; padding: 0 8px 0 8px; gap: 6px; }
.vhead .mode { width: 89px; gap: 4px; } .mode .cv, .orient .cv { margin-left: auto; }
.words { display: flex; gap: 12.400px; width: 283px; padding-left: 3px; }
.vhead span { font-size: 8.800px; }
.orient { width: 65px; gap: 6px; }
.trio { width: 42px; padding-left: 0; gap: 2px; overflow: hidden; } .trio .cv { margin-left: 1px; }
.snap { margin-left: -2px; } .prop { margin-left: -1px; }
.duo { width: 31px; padding-left: 0; gap: 4px; overflow: hidden; }
.cell { width: 16px; height: 15px; display: grid; place-items: center; }
.lit { background: #505050; } .blue { background: #4772b3; }
.xray { background: #484848; margin-left: 1px; width: 16px; padding-left: 2px; }
.shade { padding: 0 2px 0 0; gap: 0.400px; overflow: hidden; background: #2c2c2c; margin-left: -2px; } .shade .cv { margin: 0 1px 0 3px; }
.vsub { position: relative; display: flex; justify-content: space-between; padding: 4px 7px 0 36px; height: 30px; }
.modes { width: 80px; height: 15px; } .opts { width: 37px; padding-left: 5px; gap: 3px; font-size: 8.800px; }
.vbody { position: relative; display: flex; padding-left: 7px; gap: 15px; }
.toolbar { width: 34px; display: flex; flex-direction: column; gap: 1px; }
.tool { height: 27.500px; background: #282828; display: grid; place-items: center; border-radius: 2px; position: relative; }
.tool svg { width: 21px; height: 21px; margin-right: 2px; } .tool.sel { height: 25.500px; background: #4772b3; }
.tool.gap { margin-top: 4.200px; } .tool.gap2 { margin-top: 5px; }
.fly { position: relative; }
.fly::after { content: ""; position: absolute; right: 1px; bottom: 2px; border-left: 3px solid transparent; border-bottom: 3px solid #bbb; }
.info { color: #f0f0f0; font-size: 9.300px; line-height: 15.500px; margin-top: -2px; }
.info div:first-child { font-size: 8.800px; }

.timeline { transform: scaleY(-1); display: grid; grid-template-rows: 20px 16px 9px; background: #1d1d1d; font-size: 8.500px; padding: 0 3px 0 4px; width: 1031px; }
.tlhead { display: flex; align-items: center; background: #303030; padding-left: 4px; }
.tlhead > span { margin-left: 8px; width: 21px; }
.w2 { margin-left: 4px; width: 98px; padding-left: 6px; gap: 5px; }
.play { width: 132px; height: 16px; margin-left: 247px; margin-top: 1px; }
.f { background: #545454; height: 15px; display: flex; align-items: center; justify-content: center; border-radius: 3px; flex: none; }
.frame { width: 59px; margin-left: 224px; } .clock { width: 15px; margin-left: 4px; }
.start { width: 70px; margin-left: 1px; justify-content: space-between; padding: 0 12px; } .end { width: 76px; justify-content: space-between; padding: 0 11px; border-left: 1px solid #3c3c3c; }
.ruler { display: grid; grid-template-columns: repeat(14, 70.700px); padding-left: 36px; align-items: end; text-align: center; color: #999; font-size: 9.500px; line-height: 13px; }
.ruler .now { background: #4772b3; color: #eee; width: 20px; justify-self: center; height: 14px; border-radius: 2px; }
.scroll { background: #535353; margin: 0 4px 1px 5px; border-radius: 4px; display: flex; justify-content: space-between; align-items: center; }
.scroll i { width: 7px; height: 7px; border: 1px solid #222; border-radius: 50%; background: #303030; }

.right { display: grid; grid-template-rows: 111px 518px; padding-left: 1px; }
.outliner { background: #282828; font-size: 9.600px; }
.ohead { background: #303030; height: 21px; display: flex; align-items: center; padding-left: 9px; gap: 5px; }
.ohead .btn { width: 24px; }
.find { width: 94px; height: 15px; background: #1d1d1d; border-radius: 3px; padding: 1px 3px; margin-left: 10px; }
.flt { margin-left: 7px; margin-right: 1px; } .stub { width: 5px; height: 13px; background: #555; }
.orow { display: flex; align-items: center; height: 16.900px; }
.orow em { width: 9px; font-size: 7px; color: #ccc; } .orow .vis { margin-left: auto; display: flex; align-items: center; gap: 6px; padding-right: 10px; color: #eee; }
.eye { width: 11px; height: 8px; } .rnd { width: 11px; height: 10px; } .chk { width: 9px; height: 9px; }
.chip { background: #4b4b4b; border-radius: 4px; width: 16px; height: 16px; display: grid; place-items: center; }
.root { padding-left: 19px; gap: 5px; font-size: 8.800px; } .coll { padding-left: 21px; } .coll em { width: 12px; } .coll > span { margin-left: 4px; }
.kid { padding-left: 39px; } .ico { width: 16px; height: 16px; display: grid; place-items: center; margin-left: 2px; } .kid > span { margin-left: 4px; width: 40px; }
.kid > .c1 { margin-left: 10px; } .c2 { margin-left: 0; } .c3 { margin-left: -1px; }
.or { color: #db8347; } .gr { color: #1fa684; } .wh { color: #eee; }
.picked { background: #1d2f4e; } .picked > span { color: #d9712f; }

.props { display: grid; grid-template-rows: 18px 500px; background: #303030; border-top: 1px solid #181818; font-size: 9.400px; }
.phead { display: flex; align-items: center; padding-left: 9px; background: #303030; } .phead .btn { width: 24px; }
.phead .find { margin-left: 26px; } .phead .last { margin-left: 48px; }
.pbody { display: grid; grid-template-columns: 23px 1fr; }
.ptabs { background: #1d1d1d; padding-top: 9px; } .ptabs div { height: 23.350px; display: grid; place-items: center; }
.ptabs svg { width: 13px; height: 13px; } .ptabs .g1 { margin-top: 6px; } .ptabs .g2 { margin-top: 6.500px; } .ptabs .g3 { margin-top: 5px; } .ptabs .g4 { margin-top: 5px; }
.cur { background: #303030; border-radius: 3px 0 0 3px; } .gy { color: #bbb; } .rd { color: #b4555d; } .ob { color: #ec9649; } .gn { color: #1fa684; }
.pmain { padding: 8px 9px 0 7px; }
.crumb { display: flex; align-items: center; height: 18px; padding-left: 2px; gap: 8px; } .crumb .pin { margin-left: auto; color: #888; }
.name { display: grid; grid-template-columns: 26px 1fr; height: 16px; margin: 13px 0 9px; background: #1d1d1d; border: 1px solid #393939; border-radius: 3px; align-items: center; }
.name div { display: flex; align-items: center; background: #282828; height: 14px; padding-left: 3px; gap: 1px; } .name b { padding-left: 5px; }
.panel { background: #3d3d3d; height: 21px; border-radius: 3px; margin-bottom: 1px; display: flex; align-items: center; padding: 0 5px 0 7px; gap: 3px; font-size: 8.800px; }
.panel .dots { margin-left: auto; }
.panel.big { display: block; height: 233px; padding: 0; }
.ptitle { display: flex; align-items: center; height: 20px; padding: 0 5px 0 6px; gap: 4px; }
.rows { padding-top: 7px; }
.r { display: grid; grid-template-columns: 64px 71px 7px 13px 1fr; height: 16.400px; align-items: center; font-size: 9.500px; }
.r label { text-align: right; } .r b { background: #545454; margin-left: 8px; width: 71px; height: 15.600px; display: flex; align-items: center; justify-content: center; border-radius: 2px; }
.r .lk { grid-column: 4; width: 13px; height: 10px; margin-left: 4px; color: #999; } .r s { grid-column: 4; } .r i { width: 3px; height: 3px; border-radius: 50%; background: #ddd; margin-left: 12px; }
.r.sp { margin-top: 4.800px; } .r.sp4 { margin-top: 4px; }
.r .dd { background: #282828; justify-content: space-between; padding: 0 3px 0 6px; height: 15px; }
.delta { display: flex; align-items: center; gap: 3px; padding: 10px 0 0 18px; }

.status { grid-column: 1 / 3; background: #1d1d1d; display: flex; align-items: center; padding: 0 8px 2px 9px; color: #8a8a8a; font-size: 8.800px; }
.status svg { width: 12px; height: 14px; } .status span { margin-left: 9px; }
.status svg:nth-of-type(2) { margin-left: 8px; } .status svg:nth-of-type(3) { margin-left: 103px; } .status svg:nth-of-type(4) { margin-left: 132px; }
.status span:nth-of-type(3), .status span:nth-of-type(4) { margin-left: 7px; } .status .ver { margin-left: auto; font-size: 9.300px; }

.gizmo { position: absolute; left: 820px; top: 112px; width: 66px; height: 146px; }
.gl text { font: bold 8px "DejaVu Sans"; text-anchor: middle; fill: #111; }

.npanel { position: absolute; left: 895px; top: 107px; width: 133px; height: 407px; font-size: 8.500px; color: #ddd; }
.nsec { background: #3c3c3c; border-radius: 3px; margin-bottom: 1px; }
.nsec.view { height: 201px; padding-top: 1px; } .nh { display: flex; align-items: center; gap: 3px; height: 17px; padding-left: 5px; font-size: 8px; }
.nh.sub { margin-top: 7px; padding-left: 15px; gap: 2px; height: 16px; }
.nr { display: grid; grid-template-columns: 51px 68px; column-gap: 7px; height: 15px; align-items: center; font-size: 8px; }
.nr label { text-align: right; color: #bbb; font-size: 7.500px; } .nr b { background: #545454; height: 14px; display: flex; align-items: center; justify-content: center; border-radius: 2px; font-size: 8.300px; }
.nr.a { margin-top: 5px; margin-bottom: 1px; } .nr.tight { height: 14px; } .nr div { display: flex; align-items: center; gap: 3px; font-size: 7.600px; }
.nr i { width: 10px; height: 10px; background: #545454; border-radius: 2px; flex: none; }
.nr.cam { margin-top: 10px; color: #888; } .cam div b { flex: 1; background: #2c2c2c; justify-content: space-between; padding: 0 3px; margin-left: 2px; }
.nr.rend { margin-top: 10px; } .nr.lk1 { margin-top: 7px; } .nr .dark { background: #1d1d1d; justify-content: space-between; padding: 0 3px; }
.nr.lk2 { margin-top: 2px; } .nr.lk3 { margin-top: 0; }
.nsec.cursor { height: 165px; padding: 1px 7px 0; } .nh3 { display: flex; justify-content: space-between; align-items: center; height: 15px; }
.nh3 span { font-size: 7.500px; padding-left: 8px; } .nsec p { margin: 10px 0 4px; font-size: 7.600px; line-height: 8px; } .nsec .p2 { margin: 8px 0 4px; }
.stack { width: 120px; border-radius: 3px; overflow: hidden; display: grid; gap: 1px; background: #434343; } .stack div { height: 13.300px; background: #545454; display: flex; justify-content: space-between; align-items: center; padding: 0 11px; }
.ndd { display: flex; justify-content: space-between; align-items: center; background: #262626; height: 13px; border-radius: 3px; width: 120px; margin-top: 4px; padding: 0 1px 0 5px; font-size: 8.200px; }
.nsec.row { height: 18px; display: flex; align-items: center; padding: 0 5px; gap: 3px; font-size: 7.800px; } .row .dots { margin-left: auto; }
.ntabs { position: absolute; left: 1033px; top: 97px; width: 18px; height: 428px; background: #181818; padding-top: 13px; display: flex; flex-direction: column; gap: 4px; }
.ntabs span { width: 13px; height: 28px; writing-mode: vertical-rl; text-orientation: sideways; transform: rotate(180deg); text-align: center; line-height: 13px; font-size: 8px; background: #222; border: 1px solid #333; border-radius: 3px; color: #ccc; }
.ntabs .on { background: #303030; color: #eee; }

.pi { position: absolute; height: 21px; background: #181818; border: 1px solid #222; border-radius: 3px; display: flex; align-items: center; padding: 0 4px 0 7px; font-size: 7.800px; color: #ddd; }
.pi svg { width: 11px; height: 11px; margin-right: 4px; } .pi u { margin-left: auto; color: #777; }
.p8 { left: 740px; top: 177px; width: 97px; } .p7 { left: 602px; top: 209px; width: 135px; background: #545454; border-color: #2b2b2b; } .p7 u { color: #999; }
.p9 { left: 839px; top: 209px; width: 105px; } .p4 { left: 619px; top: 260px; width: 97px; } .p6 { left: 860px; top: 260px; width: 105px; }
.p1 { left: 630px; top: 311px; width: 107px; } .p3 { left: 839px; top: 311px; width: 98px; } .p2 { left: 740px; top: 343px; width: 97px; }
.tip { position: absolute; left: 581px; top: 237px; width: 78px; height: 22px; background: #181818; border-radius: 0 3px 3px 0; overflow: hidden; display: flex; align-items: center; justify-content: flex-end; padding-right: 10px; font-size: 7.900px; }
.ring { position: absolute; left: 773px; top: 244px; width: 30px; display: grid; justify-items: center; gap: 3px; font-size: 7.500px; color: #999; } .ring svg { width: 30px; height: 30px; }

.float { position: absolute; left: 25px; top: 405px; width: 197px; height: 219px; background: linear-gradient(#777 0 13px, #222 13px 45px, #3a3a3a 45px); }
.fmenu { background: #181818; border-radius: 5px 5px 0 0; margin: 1px 6px 0 3px; height: 218px; padding: 10px 11px 0 10px; display: grid; gap: 5px; align-content: start; }
.fg { border: 1px solid #2e2e2e; border-radius: 4px; background: #2e2e2e; display: grid; gap: 1px; overflow: hidden; }
.fi { height: 19.400px; background: #242424; display: flex; align-items: center; padding: 0 6px 0 3px; font-size: 11px; color: #e4e4e4; } .fi.on { background: #4772b3; }
.fi svg { width: 14px; height: 14px; margin-right: 10px; } .fi u { margin-left: auto; color: #777; font-size: 11px; } .fi.on u { color: #a9bcdc; }

.note { position: absolute; background: #ff0; color: #f00; font: 300 16px/19.300px "Noto Sans CJK SC", sans-serif; padding: 5px 0 0 9px; white-space: nowrap; }
.lat { font-family: "Open Sans", sans-serif; font-weight: 300; line-height: 1; letter-spacing: .7px; }
.n1 { left: 654px; top: 48px; width: 137px; height: 48px; } .n2 { left: 926px; top: 84px; width: 103px; height: 49px; padding-left: 10px; } .n3 { left: 529px; top: 133px; width: 96px; height: 29px; padding-left: 10px; }
.n4 { left: 65px; top: 179px; width: 137px; height: 48px; padding-left: 10px; } .n5 { left: 581px; top: 366px; width: 170px; height: 29px; padding-left: 10px; } .n6 { left: 447px; top: 504px; width: 137px; height: 87px; padding-left: 10px; }
.n7 { left: 232px; top: 556px; width: 154px; height: 49px; padding-left: 10px; } .n8 { left: 596px; top: 604px; width: 137px; height: 29px; padding-left: 10px; } .n9 { left: 553px; top: 654px; width: 137px; height: 29px; padding-left: 10px; }
.n10 { left: 1018px; top: 545px; width: 137px; height: 88px; padding-left: 10px; } .n11 { left: 1106px; top: 430px; width: 137px; height: 29px; padding-left: 10px; } .n12 { left: 1160px; top: 48px; width: 98px; height: 29px; padding-left: 10px; }
.marks { position: absolute; left: 0; top: 0; width: 1282px; height: 689px; }
```
FILE: grid.js
```js
// Perspective floor grid: each family of lines shares a vanishing point and is
// evenly spaced along the horizontal line y = base.
function family(group, vx, vy, base, start, step, from, to) {
  for (let k = from; k <= to; k++) {
    if (k === 0) continue;
    const x = start + k * step;
    const t = 6;
    const line = document.createElementNS("http://www.w3.org/2000/svg", "line");
    line.setAttribute("x1", vx);
    line.setAttribute("y1", vy);
    line.setAttribute("x2", vx + (x - vx) * t);
    line.setAttribute("y2", vy + (base - vy) * t);
    if (k % 10 === 0) line.setAttribute("class", "major");
    group.appendChild(line);
  }
}
const a = document.getElementById("gridA");
family(a, 13, -36, 400, 572.7, 64.1, -16, 45);
family(a, 1823, -36, 400, 416, 98.9, -35, 10);
const b = document.getElementById("gridB");
family(b, 384, -105, 525, 620, 53.5, -8, 40);
family(b, 3331, -105, 525, -656, 188, -24, 12);
```
